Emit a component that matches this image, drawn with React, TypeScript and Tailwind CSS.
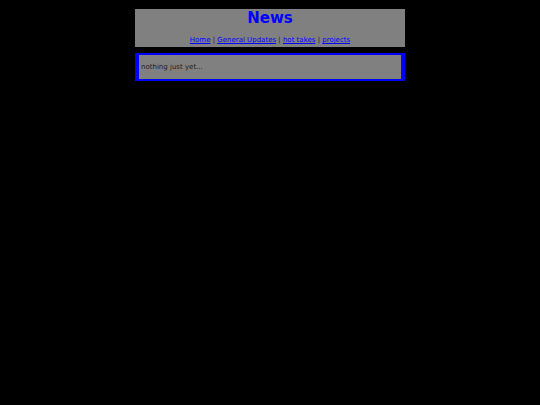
export default function App() {
  return (
    <div className="min-h-screen bg-black pt-[9px] font-['DejaVu_Sans',sans-serif]">
      <div className="mx-auto w-[270px]">
        <div className="flex h-[38px] flex-col items-center bg-[#808080]">
          <h1 className="mt-0 text-[15px] font-bold leading-[18px] text-[#0000ff]">News</h1>
          <nav className="mt-[9px] text-[7px] leading-[9px] text-[#222]">
            <a href="#" className="text-[#0000ff] underline">Home</a>
            {" | "}
            <a href="#" className="text-[#0000ff] underline">General Updates</a>
            {" | "}
            <a href="#" className="text-[#0000ff] underline">hot takes</a>
            {" | "}
            <a href="#" className="text-[#0000ff] underline">projects</a>
          </nav>
        </div>
        <div className="mt-[6px] flex h-[28px] items-center border-x-4 border-y-2 border-[#0000ff] bg-[#808080] px-[2px]">
          <p className="text-[7px] leading-[9px] text-[#222]">nothing just yet...</p>
        </div>
      </div>
    </div>
  );
}
